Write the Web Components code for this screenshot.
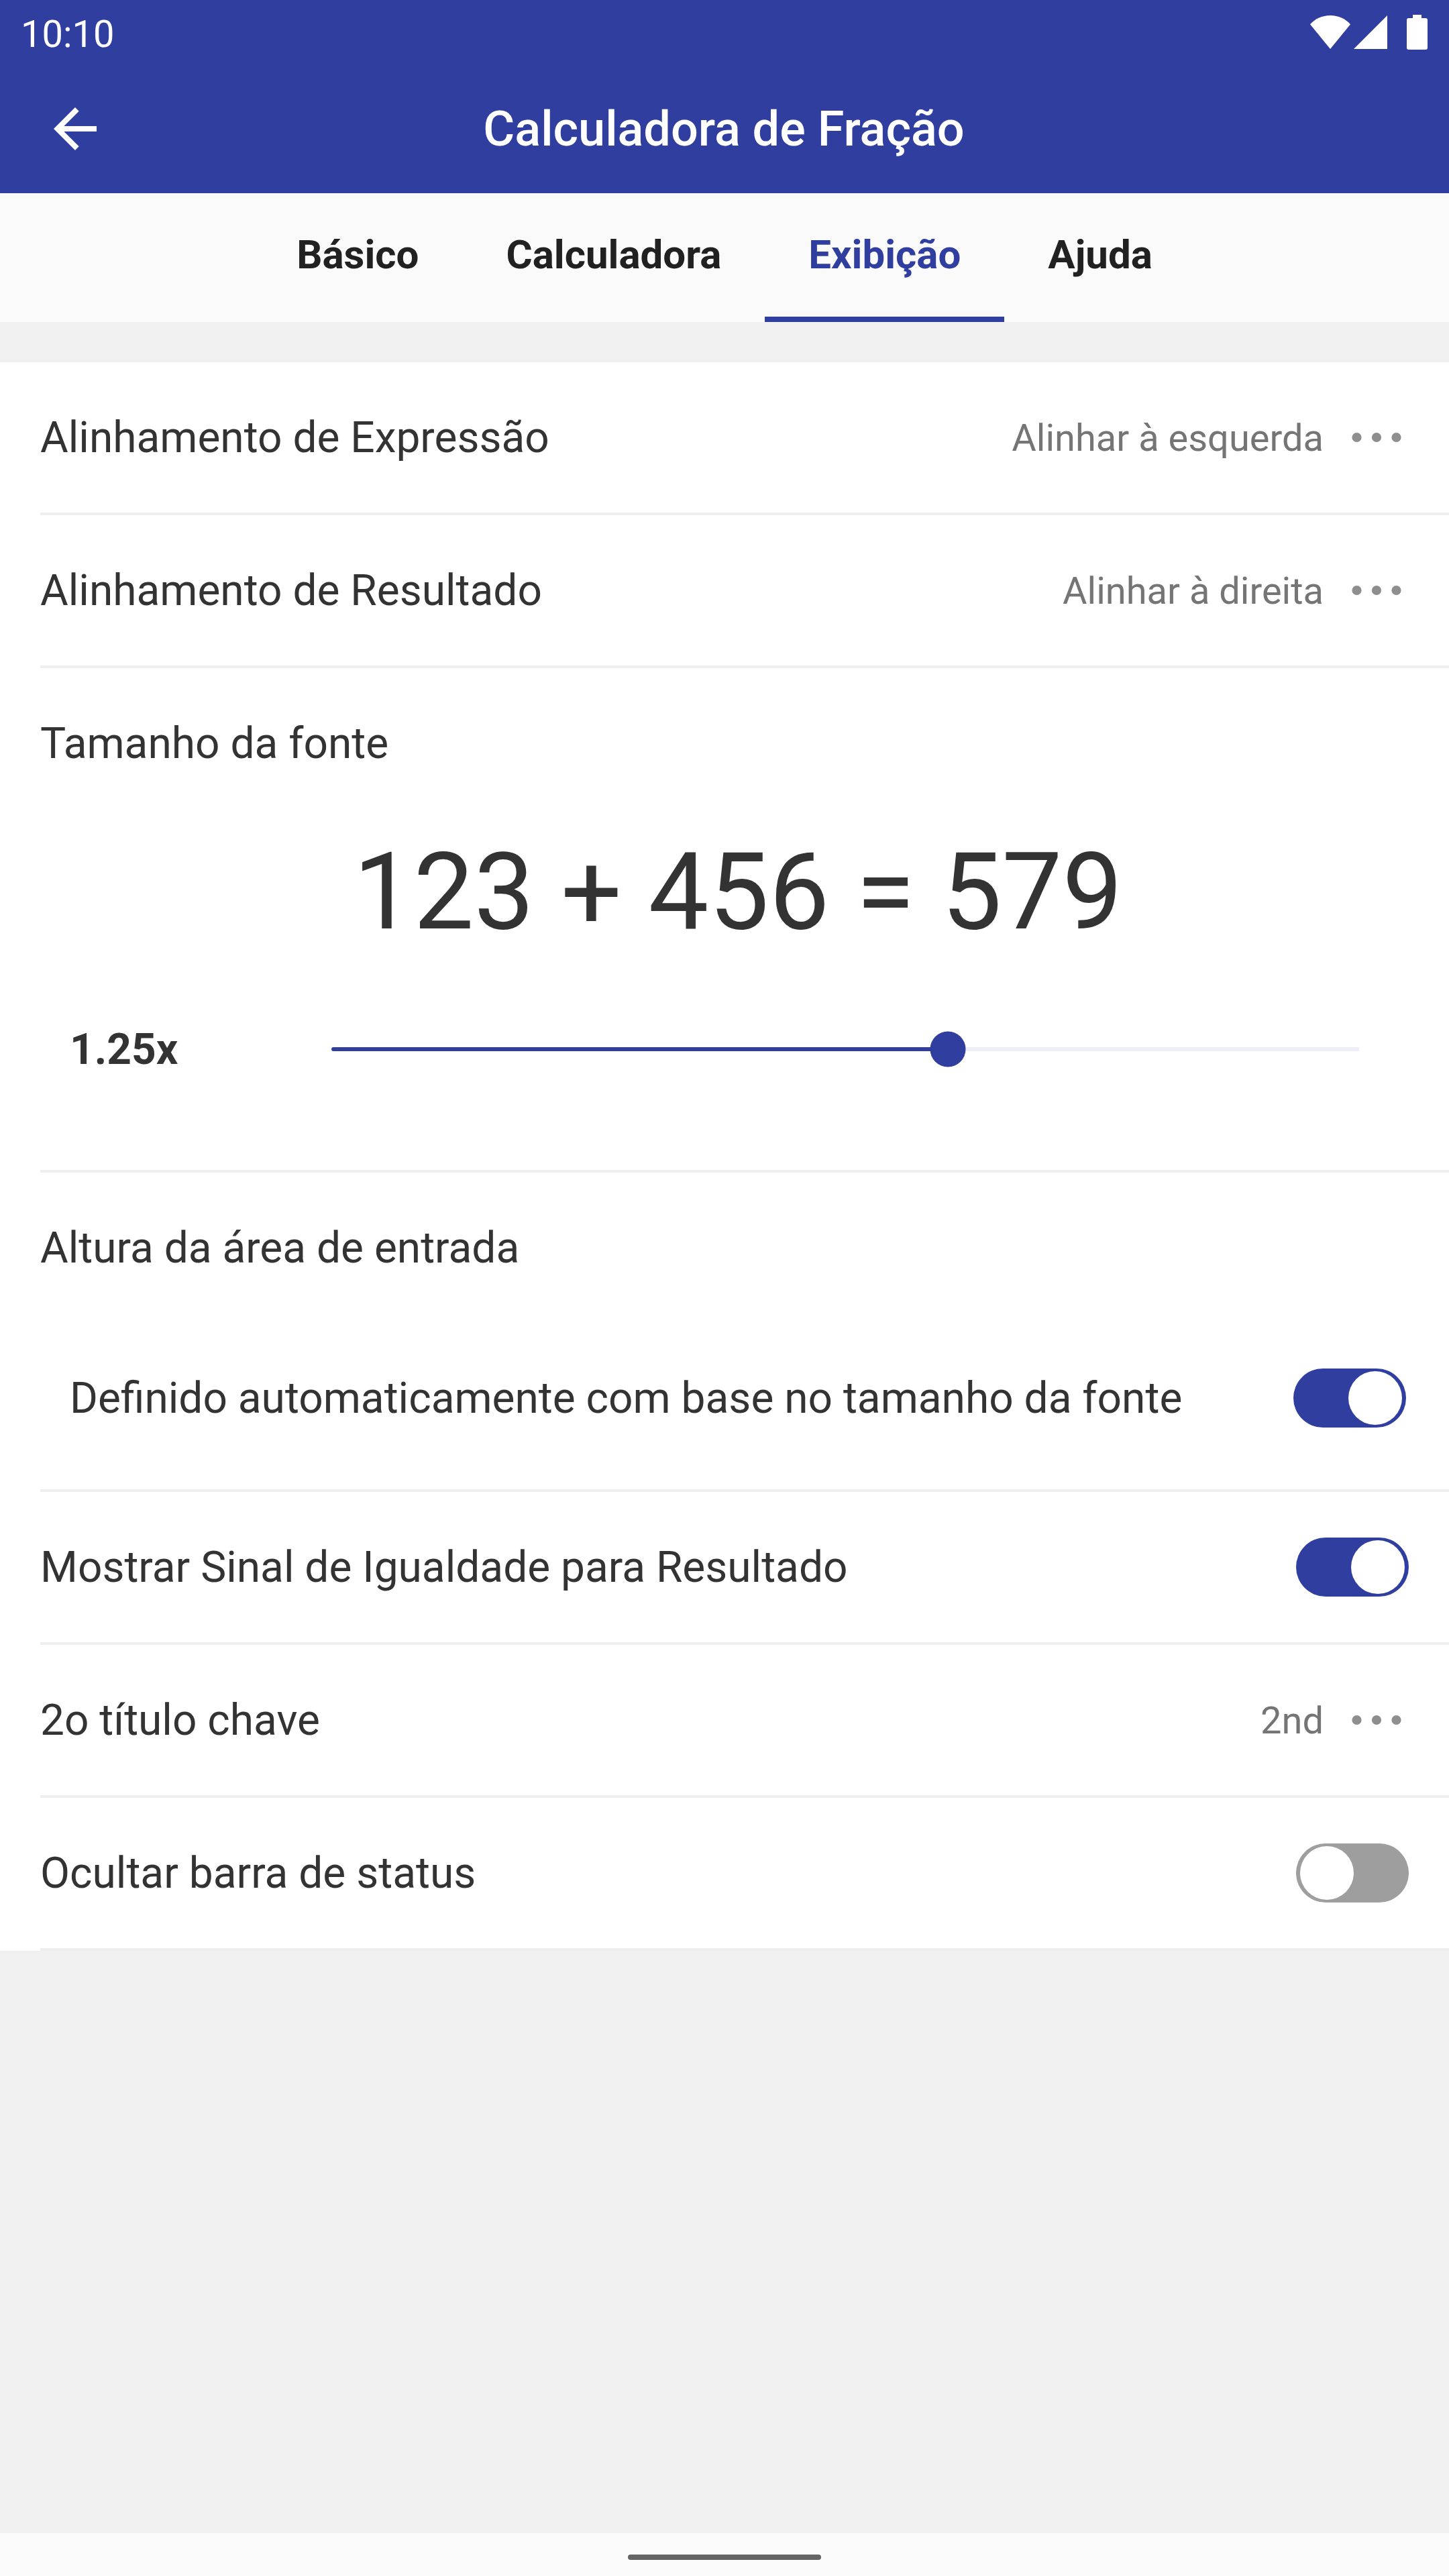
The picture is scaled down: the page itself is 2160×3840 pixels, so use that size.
<!DOCTYPE html>
<html lang="pt-BR">
<head>
<meta charset="utf-8">
<title>Calculadora de Fração</title>
<style>
    :root {
        --primary: #303f9f;
        --surface: #fafafa;
        --backdrop: #f0f0f0;
        --divider: #eeeeee;
        --text: #333333;
        --text-muted: #757575;
        --switch-off: #9e9e9e;
    }

    html, body {
        margin: 0;
        width: 2160px;
        height: 3840px;
        overflow: hidden;
    }

    body {
        font-family: Roboto, "Noto Sans", sans-serif;
        background: var(--backdrop);
        color: var(--text);
    }
</style>
</head>
<body>
<app-screen>
    <status-bar slot="top" time="10:10"></status-bar>
    <app-bar slot="top">Calculadora de Fração</app-bar>
    <tab-bar slot="top">
        <tab-item>Básico</tab-item>
        <tab-item>Calculadora</tab-item>
        <tab-item selected>Exibição</tab-item>
        <tab-item>Ajuda</tab-item>
    </tab-bar>

    <settings-row>Alinhamento de Expressão<option-value slot="end">Alinhar à esquerda</option-value></settings-row>
    <settings-row>Alinhamento de Resultado<option-value slot="end">Alinhar à direita</option-value></settings-row>
    <settings-group heading="Tamanho da fonte">
        <font-preview>123 + 456 = 579</font-preview>
        <value-slider label="1.25x" value="60"></value-slider>
    </settings-group>
    <settings-group heading="Altura da área de entrada">
        <settings-row nested>Definido automaticamente com base no tamanho da fonte<toggle-switch slot="end" checked></toggle-switch></settings-row>
    </settings-group>
    <settings-row>Mostrar Sinal de Igualdade para Resultado<toggle-switch slot="end" checked></toggle-switch></settings-row>
    <settings-row>2o título chave<option-value slot="end">2nd</option-value></settings-row>
    <settings-row>Ocultar barra de status<toggle-switch slot="end"></toggle-switch></settings-row>

    <nav-handle slot="bottom"></nav-handle>
</app-screen>

<script>
class AppScreen extends HTMLElement {
    constructor() {
        super();
        this.attachShadow({ mode: "open" });
    }

    static get styles() {
        return /* css */`
            :host {
                display: flex;
                flex-direction: column;
                width: 2160px;
                height: 3840px;
            }

            main {
                flex: 1;
                padding-top: 60px;
            }

            .list {
                background: #fff;
            }
        `;
    }

    connectedCallback() {
        this.shadowRoot.innerHTML = /* html */`
        <style>${AppScreen.styles}</style>
        <slot name="top"></slot>
        <main><div class="list"><slot></slot></div></main>
        <slot name="bottom"></slot>`;
    }
}

class StatusBar extends HTMLElement {
    constructor() {
        super();
        this.attachShadow({ mode: "open" });
    }

    static get styles() {
        return /* css */`
            :host {
                display: flex;
                justify-content: space-between;
                align-items: center;
                box-sizing: border-box;
                height: 96px;
                padding: 0 32px 0 31px;
                background: var(--primary);
                color: #fff;
                font-size: 56px;
                line-height: 66px;
            }

            .time {
                padding-top: 6px;
            }

            .icons {
                display: flex;
                fill: currentColor;
            }

            svg {
                display: block;
            }

            .signal {
                margin-left: 5px;
            }

            .battery {
                margin-left: 29px;
            }
        `;
    }

    connectedCallback() {
        this.shadowRoot.innerHTML = /* html */`
        <style>${StatusBar.styles}</style>
        <span class="time">${this.getAttribute("time")}</span>
        <div class="icons">
            <svg class="wifi" width="60" height="52" viewBox="0 0 60 52"><path d="M30 51 0 14.300C7.500 5.800 18 1 30 1s22.500 4.800 30 13.300z"/></svg>
            <svg class="signal" width="50" height="52" viewBox="0 0 50 52"><path d="M0 51H50V1z"/></svg>
            <svg class="battery" width="31" height="52" viewBox="0 0 31 52"><path d="M9 0h13v5h6a3 3 0 0 1 3 3v41a3 3 0 0 1-3 3H3a3 3 0 0 1-3-3V8a3 3 0 0 1 3-3h6z"/></svg>
        </div>`;
    }
}

class AppBar extends HTMLElement {
    constructor() {
        super();
        this.attachShadow({ mode: "open" });
    }

    static get styles() {
        return /* css */`
            :host {
                display: grid;
                grid-template-columns: 96px 1fr 96px;
                align-items: center;
                box-sizing: border-box;
                height: 192px;
                padding: 0 64px;
                background: var(--primary);
                color: #fff;
            }

            svg {
                display: block;
                fill: currentColor;
            }

            .title {
                padding: 2px 2px 0 0;
                text-align: center;
                font-size: 72px;
                font-weight: 500;
                line-height: 84px;
            }
        `;
    }

    connectedCallback() {
        this.shadowRoot.innerHTML = /* html */`
        <style>${AppBar.styles}</style>
        <svg width="96" height="96" viewBox="0 0 24 24"><path d="M20 11H7.830l5.590-5.590L12 4l-8 8 8 8 1.410-1.410L7.830 13H20z"/></svg>
        <div class="title"><slot></slot></div>`;
    }
}

class TabBar extends HTMLElement {
    constructor() {
        super();
        this.attachShadow({ mode: "open" });
    }

    connectedCallback() {
        this.shadowRoot.innerHTML = /* html */`
        <style>
            :host {
                display: flex;
                justify-content: center;
                height: 192px;
                background: var(--surface);
            }
        </style>
        <slot></slot>`;
    }
}

class TabItem extends HTMLElement {
    constructor() {
        super();
        this.attachShadow({ mode: "open" });
    }

    connectedCallback() {
        this.shadowRoot.innerHTML = /* html */`
        <style>
            :host {
                display: flex;
                align-items: center;
                box-sizing: border-box;
                padding: 0 65px;
                border-bottom: 8px solid transparent;
                color: #212121;
                font-size: 60px;
                font-weight: 700;
                line-height: 70px;
            }

            :host([selected]) {
                border-bottom-color: var(--primary);
                color: var(--primary);
            }
        </style>
        <slot></slot>`;
    }
}

class SettingsRow extends HTMLElement {
    constructor() {
        super();
        this.attachShadow({ mode: "open" });
    }

    static get styles() {
        return /* css */`
            :host {
                display: block;
                padding-left: 60px;
                font-size: 64px;
                line-height: 76px;
            }

            .row {
                display: flex;
                justify-content: space-between;
                align-items: center;
                height: 224px;
                padding-right: 60px;
                border-bottom: 4px solid var(--divider);
            }

            .title {
                padding-top: 2px;
            }

            /* rows inside a group: the group draws the divider */
            :host([nested]) {
                padding-left: 44px;
            }

            :host([nested]) .row {
                padding-right: 64px;
                border-bottom: 0;
            }
        `;
    }

    connectedCallback() {
        this.shadowRoot.innerHTML = /* html */`
        <style>${SettingsRow.styles}</style>
        <div class="row">
            <span class="title"><slot></slot></span>
            <slot name="end"></slot>
        </div>`;
    }
}

class SettingsGroup extends HTMLElement {
    constructor() {
        super();
        this.attachShadow({ mode: "open" });
    }

    static get styles() {
        return /* css */`
            :host {
                display: block;
                padding-left: 60px;
            }

            .group {
                padding-bottom: 24px;
                border-bottom: 4px solid var(--divider);
            }

            .heading {
                display: flex;
                align-items: center;
                box-sizing: border-box;
                height: 224px;
                padding-top: 2px;
                font-size: 64px;
                line-height: 76px;
            }
        `;
    }

    connectedCallback() {
        this.shadowRoot.innerHTML = /* html */`
        <style>${SettingsGroup.styles}</style>
        <div class="group">
            <div class="heading">${this.getAttribute("heading")}</div>
            <slot></slot>
        </div>`;
    }
}

class OptionValue extends HTMLElement {
    constructor() {
        super();
        this.attachShadow({ mode: "open" });
    }

    connectedCallback() {
        this.shadowRoot.innerHTML = /* html */`
        <style>
            :host {
                display: flex;
                align-items: center;
                gap: 31px;
                color: var(--text-muted);
                font-size: 56px;
                line-height: 66px;
            }

            span {
                padding-top: 1px;
            }

            svg {
                display: block;
                fill: #8e8e8e;
            }
        </style>
        <span><slot></slot></span>
        <svg width="96" height="24" viewBox="0 0 96 24">
            <circle cx="18.500" cy="12" r="7.100"/>
            <circle cx="48" cy="12" r="7.100"/>
            <circle cx="77.500" cy="12" r="7.100"/>
        </svg>`;
    }
}

class ToggleSwitch extends HTMLElement {
    constructor() {
        super();
        this.attachShadow({ mode: "open" });
    }

    connectedCallback() {
        this.shadowRoot.innerHTML = /* html */`
        <style>
            :host {
                display: flex;
                box-sizing: border-box;
                width: 168px;
                height: 88px;
                padding: 4px 6px;
                border-radius: 44px;
                background: var(--switch-off);
            }

            :host([checked]) {
                justify-content: flex-end;
                background: var(--primary);
            }

            .knob {
                width: 80px;
                height: 80px;
                border-radius: 50%;
                background: #fff;
            }
        </style>
        <div class="knob"></div>`;
    }
}

class FontPreview extends HTMLElement {
    constructor() {
        super();
        this.attachShadow({ mode: "open" });
    }

    connectedCallback() {
        this.shadowRoot.innerHTML = /* html */`
        <style>
            :host {
                display: block;
                padding: 16px 20px 0 0;
                text-align: center;
                font-size: 160px;
                line-height: 188px;
            }
        </style>
        <slot></slot>`;
    }
}

class ValueSlider extends HTMLElement {
    constructor() {
        super();
        this.attachShadow({ mode: "open" });
    }

    static get styles() {
        return /* css */`
            :host {
                display: flex;
                align-items: center;
                height: 280px;
                padding: 0 134px 16px 44px;
                font-size: 64px;
                font-weight: 700;
                line-height: 76px;
            }

            .label {
                width: 390px;
                padding-top: 1px;
            }

            .track {
                position: relative;
                flex: 1;
                height: 6px;
                background: #eeeefb;
                border-radius: 3px 0 0 3px;
            }

            .fill {
                height: 6px;
                border-radius: 3px 0 0 3px;
                background: var(--primary);
            }

            .thumb {
                position: absolute;
                top: 50%;
                width: 53px;
                height: 53px;
                border-radius: 50%;
                background: var(--primary);
                transform: translate(-50%, -50%);
            }
        `;
    }

    connectedCallback() {
        const value = this.getAttribute("value");
        this.shadowRoot.innerHTML = /* html */`
        <style>${ValueSlider.styles}</style>
        <span class="label">${this.getAttribute("label")}</span>
        <div class="track">
            <div class="fill" style="width: ${value}%"></div>
            <div class="thumb" style="left: ${value}%"></div>
        </div>`;
    }
}

class NavHandle extends HTMLElement {
    constructor() {
        super();
        this.attachShadow({ mode: "open" });
    }

    connectedCallback() {
        this.shadowRoot.innerHTML = /* html */`
        <style>
            :host {
                display: flex;
                justify-content: center;
                box-sizing: border-box;
                height: 64px;
                padding-top: 32px;
                background: var(--surface);
            }

            .pill {
                width: 288px;
                height: 8px;
                border-radius: 4px;
                background: #646464;
            }
        </style>
        <div class="pill"></div>`;
    }
}

customElements.define("app-screen", AppScreen);
customElements.define("status-bar", StatusBar);
customElements.define("app-bar", AppBar);
customElements.define("tab-bar", TabBar);
customElements.define("tab-item", TabItem);
customElements.define("settings-row", SettingsRow);
customElements.define("settings-group", SettingsGroup);
customElements.define("option-value", OptionValue);
customElements.define("toggle-switch", ToggleSwitch);
customElements.define("font-preview", FontPreview);
customElements.define("value-slider", ValueSlider);
customElements.define("nav-handle", NavHandle);
</script>
</body>
</html>
